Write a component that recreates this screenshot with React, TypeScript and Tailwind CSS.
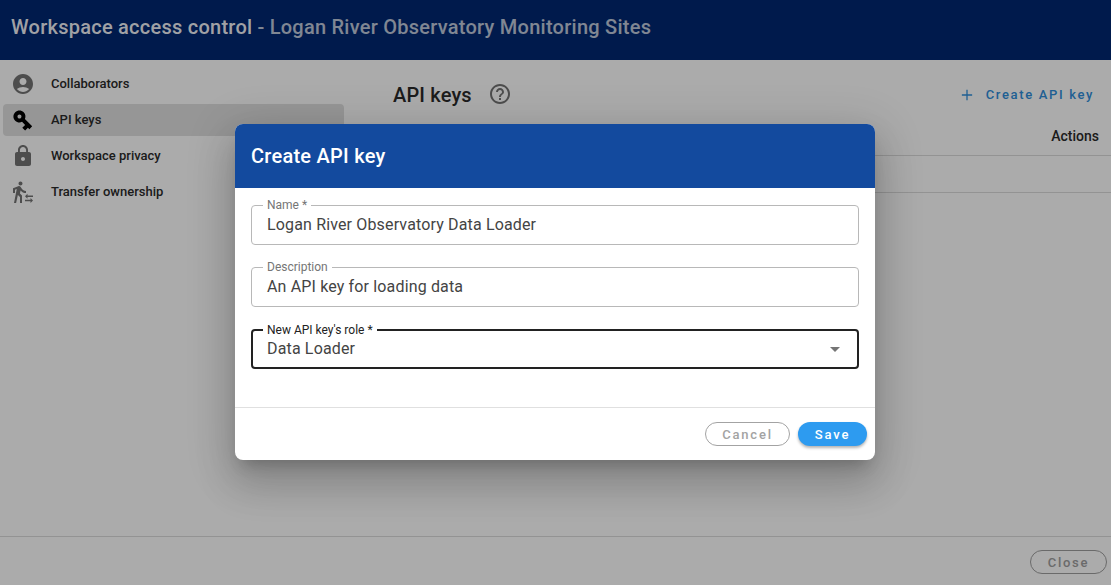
import React from 'react';

const icons = {
  account: 'M12 2C6.48 2 2 6.48 2 12s4.48 10 10 10 10-4.48 10-10S17.52 2 12 2zm0 4c1.93 0 3.5 1.57 3.5 3.5S13.93 13 12 13s-3.5-1.57-3.5-3.5S10.07 6 12 6zm0 14c-2.03 0-4.43-.82-6.14-2.88C7.55 15.8 9.68 15 12 15s4.45.8 6.14 2.12C16.43 19.18 14.03 20 12 20z',
  key: 'M12.65 10C11.83 7.67 9.61 6 7 6c-3.31 0-6 2.69-6 6s2.69 6 6 6c2.61 0 4.83-1.67 5.65-4H17v4h4v-4h2v-4H12.65zM7 14c-1.1 0-2-.9-2-2s.9-2 2-2 2 .9 2 2-.9 2-2 2z',
  lock: 'M18 8h-1V6c0-2.76-2.24-5-5-5S7 3.24 7 6v2H6c-1.1 0-2 .9-2 2v10c0 1.1.9 2 2 2h12c1.1 0 2-.9 2-2V10c0-1.1-.9-2-2-2zm-6 9c-1.1 0-2-.9-2-2s.9-2 2-2 2 .9 2 2-.9 2-2 2zm3.1-9H8.9V6c0-1.71 1.39-3.1 3.1-3.1 1.71 0 3.1 1.39 3.1 3.1v2z',
  transfer: 'M16.49 15.5v-1.75L14 16.25l2.49 2.5V17H22v-1.5h-5.51zm3.02 4.25H14v1.5h5.51V23L22 20.5 19.51 18v1.75zM9.5 5.5c1.1 0 2-.9 2-2s-.9-2-2-2-2 .9-2 2 .9 2 2 2zM5.75 8.9L3 23h2.1l1.75-8L9 17v6h2v-7.55L8.95 13.4l.6-3C10.85 12 12.8 13 15 13v-2c-1.85 0-3.45-1-4.35-2.45l-.95-1.6C9.35 6.35 8.7 6 8 6c-.25 0-.5.05-.75.15L2 8.3V13h2V9.65l1.75-.75',
  help: 'M11 18h2v-2h-2v2zm1-16C6.48 2 2 6.48 2 12s4.48 10 10 10 10-4.48 10-10S17.52 2 12 2zm0 18c-4.41 0-8-3.59-8-8s3.59-8 8-8 8 3.59 8 8-3.59 8-8 8zm0-14c-2.21 0-4 1.79-4 4h2c0-1.1.9-2 2-2s2 .9 2 2c0 2-3 1.75-3 5h2c0-2.25 3-2.5 3-5 0-2.21-1.79-4-4-4z',
};

const Icon = ({ d, className }: { d: string; className?: string }) => (
  <svg viewBox="0 0 24 24" fill="currentColor" className={className}>
    <path d={d} />
  </svg>
);

const navItems = [
  { label: 'Collaborators', d: icons.account, icon: 'text-black/55' },
  { label: 'API keys', d: icons.key, icon: 'text-black rotate-45', active: true },
  { label: 'Workspace privacy', d: icons.lock, icon: 'text-black/55' },
  { label: 'Transfer ownership', d: icons.transfer, icon: 'text-black/55' },
];

const Field = ({ label, value, focused, select }: { label: string; value: string; focused?: boolean; select?: boolean }) => (
  <div className={`relative h-10 rounded flex items-center pl-[15px] pr-[17px] ${focused ? 'border-2 border-[#222222]' : 'border border-[#b8b8b8]'}`}>
    <span className={`absolute top-[-7px] bg-white px-[4px] text-[12px] leading-[13px] ${focused ? 'left-[10px] text-[#222222]' : 'left-[11px] text-[#757575]'}`}>
      {label}
    </span>
    <span className={`flex-1 text-[16px] tracking-[0.15px] text-[#444444] ${focused ? '-ml-px' : ''}`}>{value}</span>
    {select && <span className="h-0 w-0 border-x-[5px] border-t-[5px] border-x-transparent border-t-[#757575]" />}
  </div>
);

export default function App() {
  return (
    <div className="relative flex h-[585px] w-[1111px] flex-col overflow-hidden bg-white font-['Roboto',sans-serif] text-[#2b2b2b]">
      <header className="flex h-[60px] items-center bg-[#002772] px-[11px] pb-[6px] text-[20px] font-medium tracking-[0.25px] text-white/95">
        Workspace access control
        <span className="ml-[5px] text-white/75">- Logan River Observatory Monitoring Sites</span>
      </header>

      <div className="flex flex-1">
        <nav className="flex w-[347px] flex-col gap-1 pl-[3px] pr-[3px] pt-2">
          {navItems.map(item => (
            <div
              key={item.label}
              className={`flex h-8 items-center rounded pl-2 text-[13px] font-medium ${item.active ? 'bg-black/[0.12]' : ''}`}
            >
              <Icon d={item.d} className={`h-6 w-6 ${item.icon}`} />
              <span className="ml-4">{item.label}</span>
            </div>
          ))}
        </nav>

        <main className="flex-1">
          <div className="flex h-[68px] items-center justify-between pl-[46px] pr-[17px]">
            <div className="flex items-center">
              <h2 className="pt-[2px] text-[20px] font-medium tracking-[0.15px]">API keys</h2>
              <Icon d={icons.help} className="ml-[16px] h-6 w-6 text-black/55" />
            </div>
            <button className="flex items-center pt-px text-[13px] font-medium tracking-[1.65px] text-[#2f8edb]">
              <svg viewBox="0 0 14 14" className="mr-[13px] h-3 w-3" fill="none" stroke="currentColor" strokeWidth="1.5">
                <path d="M7 1v12M1 7h12" />
              </svg>
              Create API key
            </button>
          </div>
          <div className="flex h-[28px] justify-end border-b border-[#dcdcdc] pr-3 text-[14px] font-medium leading-[16px]">
            Actions
          </div>
          <div className="h-[37px] border-b border-[#dcdcdc]" />
        </main>
      </div>

      <footer className="flex h-[49px] items-center justify-end border-t border-[#dcdcdc] pr-1">
        <button className="mt-[2px] h-6 w-[77px] rounded-full border border-[#9e9e9e] pt-[2px] text-[13px] font-medium tracking-[1.7px] text-[#9e9e9e]">
          Close
        </button>
      </footer>

      {/* dialog over the dimmed page */}
      <div className="absolute inset-0 flex items-start justify-center bg-black/[0.33] pr-px pt-[124px]">
        <div className="w-[640px] overflow-hidden rounded-lg bg-white shadow-[0_11px_15px_-7px_rgba(0,0,0,0.2),0_24px_38px_3px_rgba(0,0,0,0.14),0_9px_46px_8px_rgba(0,0,0,0.12)]">
          <div className="flex h-16 items-center bg-[#134a9e] px-4 text-[20px] font-medium tracking-[0.25px] text-white">
            Create API key
          </div>
          <div className="flex h-[220px] flex-col gap-[22px] border-b border-[#e0e0e0] px-4 pt-[17px]">
            <Field label="Name *" value="Logan River Observatory Data Loader" />
            <Field label="Description" value="An API key for loading data" />
            <Field label="New API key's role *" value="Data Loader" focused select />
          </div>
          <div className="flex h-[52px] items-center justify-end gap-2 px-2">
            <button className="h-6 w-[85px] rounded-full border border-[#a3a3a3] pt-px text-[13px] font-medium tracking-[1.8px] text-[#a3a3a3]">
              Cancel
            </button>
            <button className="h-6 w-[69px] rounded-full bg-[#2d9bf0] pt-px text-[13px] font-medium tracking-[1.8px] text-white shadow-[0_2px_3px_rgba(0,0,0,0.3)]">
              Save
            </button>
          </div>
        </div>
      </div>
    </div>
  );
}
